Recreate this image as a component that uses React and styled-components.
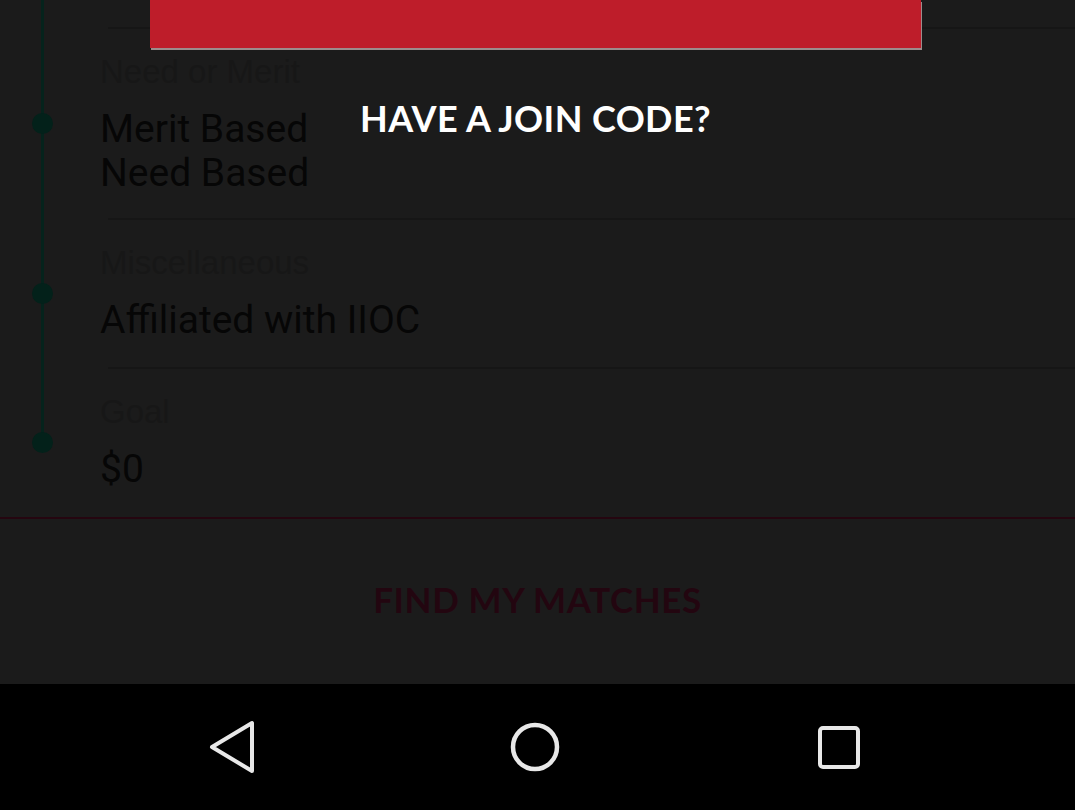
import React from 'react';
import styled, { createGlobalStyle } from 'styled-components';

const GlobalStyle = createGlobalStyle`
  html, body {
    margin: 0;
    padding: 0;
    background: #000;
  }
  * {
    box-sizing: border-box;
  }
`;

const criteria = [
  { label: 'Need or Merit', values: ['Merit Based', 'Need Based'], height: 191 },
  { label: 'Miscellaneous', values: ['Affiliated with IIOC'], height: 149 },
  { label: 'Goal', values: ['$0'], height: 150, last: true },
];

const Screen = styled.div`
  position: relative;
  width: 1075px;
  height: 810px;
  display: flex;
  flex-direction: column;
  overflow: hidden;
  font-family: Roboto, 'Liberation Sans', sans-serif;
`;

const Content = styled.div`
  flex: 1;
  display: flex;
  flex-direction: column;
  background: #1b1b1b;
`;

const Timeline = styled.div`
  display: flex;
  flex-direction: column;
  padding-top: 27px;
  border-bottom: 2px solid #250610;
`;

const Row = styled.div`
  display: flex;
  height: ${(p) => p.height}px;
`;

const Rail = styled.div`
  position: relative;
  width: 100px;
  flex-shrink: 0;

  &::before {
    content: '';
    position: absolute;
    left: 41px;
    top: ${(p) => (p.first ? '-27px' : '0')};
    bottom: ${(p) => (p.last ? '50%' : '0')};
    width: 3px;
    background: #05231c;
  }
`;

const Dot = styled.span`
  position: absolute;
  left: 32px;
  top: 50%;
  width: 21px;
  height: 21px;
  margin-top: -10px;
  border-radius: 50%;
  background: #03211a;
`;

const Body = styled.div`
  position: relative;
  flex: 1;
  display: flex;
  flex-direction: column;
  padding-top: 26px;

  &::before {
    content: '';
    position: absolute;
    left: 8px;
    right: 0;
    top: 0;
    height: 2px;
    background: #161616;
  }
`;

const Label = styled.div`
  font-family: 'Liberation Sans', Roboto, sans-serif;
  font-size: 33px;
  line-height: 38px;
  color: #171717;
  margin-bottom: 16px;
`;

const Value = styled.div`
  font-size: 39px;
  line-height: 44px;
  color: #060606;
`;

const Footer = styled.div`
  flex: 1;
  display: flex;
  align-items: center;
  justify-content: center;
`;

const MatchButton = styled.div`
  font-family: Lato, 'Liberation Sans', sans-serif;
  font-weight: 700;
  font-size: 35px;
  letter-spacing: 0.6px;
  color: #230610;
  padding-bottom: 6px;
`;

const NavBar = styled.div`
  height: 126px;
  background: #000;
  display: grid;
  grid-template-columns: repeat(3, 1fr);
  align-items: center;
  justify-items: center;
  padding: 0 84px 0 80px;
`;

const NavIcon = styled.svg`
  width: 56px;
  height: 56px;
  fill: none;
  stroke: #e8e8e8;
  stroke-width: ${(p) => p.weight || 4};
  stroke-linejoin: round;
`;

const Modal = styled.div`
  position: absolute;
  left: 150px;
  top: 0;
  width: 771px;
  display: flex;
  flex-direction: column;
  align-items: center;
`;

const RedButton = styled.div`
  width: 100%;
  height: 48px;
  background: #be1d2a;
  box-shadow: 1px 2px 0 #9c8c8c;
`;

const JoinText = styled.div`
  margin-top: 48px;
  font-family: Lato, 'Liberation Sans', sans-serif;
  font-weight: 700;
  font-size: 36px;
  color: #fff;
  letter-spacing: 0.4px;
`;

const App = () => {
  return (
    <Screen>
      <GlobalStyle />
      <Content>
        <Timeline>
          {criteria.map(({ label, values, height, last }, i) => (
            <Row key={label} height={height}>
              <Rail first={i === 0} last={last}>
                <Dot />
              </Rail>
              <Body>
                <Label>{label}</Label>
                {values.map((v) => (
                  <Value key={v}>{v}</Value>
                ))}
              </Body>
            </Row>
          ))}
        </Timeline>
        <Footer>
          <MatchButton>FIND MY MATCHES</MatchButton>
        </Footer>
      </Content>
      <NavBar>
        <NavIcon viewBox="0 0 56 56">
          <path d="M48 4 L48 52 L8 28 Z" />
        </NavIcon>
        <NavIcon viewBox="0 0 56 56" weight={4.5}>
          <circle cx="28" cy="28" r="22" />
        </NavIcon>
        <NavIcon viewBox="0 0 56 56">
          <rect x="9" y="9" width="38" height="39" rx="3" />
        </NavIcon>
      </NavBar>
      <Modal>
        <RedButton />
        <JoinText>HAVE A JOIN CODE?</JoinText>
      </Modal>
    </Screen>
  );
};

export default App;
